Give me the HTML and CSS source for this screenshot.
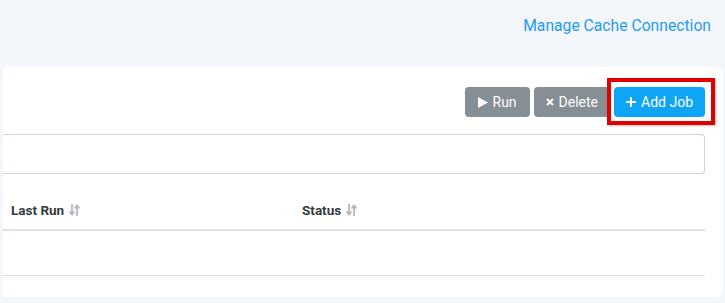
FILE: index.html
```html
<!DOCTYPE html>
<html lang="en">
<head>
    <meta charset="UTF-8">
    <meta name="viewport" content="width=device-width, initial-scale=1.0">
    <title>Jobs</title>
    <link rel="stylesheet" href="styles.css">
</head>
<body>

    <!-- Top bar -->
    <div class="top-bar">
        <a class="cache-link" href="#">Manage Cache Connection</a>
    </div>

    <!-- Jobs card -->
    <div class="card">
        <div class="toolbar">
            <button class="btn btn-gray">
                <svg width="10" height="11" viewBox="0 0 10 11"><path d="M0 0 L10 5.5 L0 11 Z" fill="#fff"/></svg>
                Run
            </button>
            <button class="btn btn-gray btn-delete">
                <svg width="8" height="8" viewBox="0 0 8 8"><path d="M1 1 L7 7 M7 1 L1 7" stroke="#fff" stroke-width="2"/></svg>
                Delete
            </button>
            <div class="highlight">
                <button class="btn btn-blue">
                    <svg width="10" height="10" viewBox="0 0 10 10"><path d="M5 0 V10 M0 5 H10" stroke="#fff" stroke-width="2"/></svg>
                    Add Job
                </button>
                <span class="highlight-box"></span>
            </div>
        </div>

        <div class="search-box"></div>

        <table class="jobs-table">
            <thead>
                <tr>
                    <th class="col-last">Last Run
                        <svg class="sort" width="11" height="12" viewBox="0 0 11 12"><path d="M3 0 V10 M0.5 7.5 L3 10.5 L5.5 7.5 M8 12 V2 M5.5 4.5 L8 1.5 L10.5 4.5" stroke="#b3b9bf" stroke-width="1.8" fill="none"/></svg>
                    </th>
                    <th>Status
                        <svg class="sort" width="11" height="12" viewBox="0 0 11 12"><path d="M3 0 V10 M0.5 7.5 L3 10.5 L5.5 7.5 M8 12 V2 M5.5 4.5 L8 1.5 L10.5 4.5" stroke="#b3b9bf" stroke-width="1.8" fill="none"/></svg>
                    </th>
                </tr>
            </thead>
            <tbody>
                <tr>
                    <td></td>
                    <td></td>
                </tr>
            </tbody>
        </table>
    </div>

</body>
</html>
```

FILE: styles.css
```css
body {
    margin: 0;
    padding: 0;
    background-color: #f3f6fa;
    font-family: Roboto, "Liberation Sans", sans-serif;
}

.top-bar {
    height: 67px;
    display: flex;
    justify-content: flex-end;
    align-items: flex-start;
    padding: 16px 14px 0 0;
    box-sizing: border-box;
}

.cache-link {
    color: #1e9cf2;
    font-size: 15.7px;
    text-decoration: none;
}

.card {
    background-color: #fff;
    margin: 0 2px 0 3px;
    padding: 20px 18px 21px 0;
    border-radius: 0 6px 6px 0;
}

.toolbar {
    display: flex;
    justify-content: flex-end;
    gap: 4px;
}

.btn {
    height: 30px;
    border: none;
    border-radius: 4px;
    color: #fff;
    font-family: Roboto, "Liberation Sans", sans-serif;
    font-size: 14px;
    padding: 0 13px;
    display: flex;
    align-items: center;
    gap: 5px;
    cursor: pointer;
}

.btn-gray {
    background-color: #868e96;
}

.btn-delete {
    padding: 0 12px;
}

.btn-blue {
    background-color: #0ea5f7;
    padding: 0 12px;
}

/* Red highlight around Add Job */
.highlight {
    position: relative;
}

.highlight-box {
    position: absolute;
    left: -7px;
    top: -9px;
    right: -10px;
    bottom: -8px;
    border: 4px solid #e00000;
    box-shadow: 1px 1px 2px rgba(0, 0, 0, 0.25);
}

.search-box {
    height: 40px;
    box-sizing: border-box;
    margin-top: 17px;
    border: 1px solid #ced4da;
    border-left: none;
    border-radius: 0 4px 4px 0;
}

.jobs-table {
    width: 100%;
    margin-top: 16px;
    border-collapse: collapse;
}

.jobs-table th {
    text-align: left;
    height: 40px;
    padding: 0 8px;
    font-size: 13.5px;
    font-weight: bold;
    color: #343a40;
    border-bottom: 2px solid #dee2e6;
    box-sizing: border-box;
}

.jobs-table .col-last {
    width: 291px;
}

.jobs-table td {
    height: 45px;
    border-bottom: 1px solid #dee2e6;
    box-sizing: border-box;
}

.sort {
    margin-left: 1px;
    vertical-align: -1px;
}
```
